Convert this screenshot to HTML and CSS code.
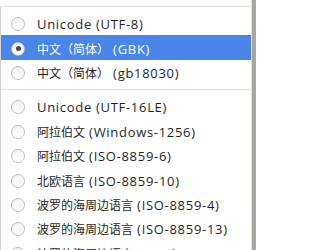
FILE: index.html
```html
<!DOCTYPE html>
<html>
<head>
<meta charset="utf-8">
<link rel="stylesheet" href="styles.css">
</head>
<body>
<div class="screen">
  <div class="main">
    <div class="sep top"></div>
    <div class="menu">
      <div class="item"><span class="radio"></span><span class="label">Unicode (UTF-8)</span></div>
      <div class="item selected"><span class="radio checked"></span><span class="label"><span class="cjk">中文（简体）</span> (GBK)</span></div>
      <div class="item"><span class="radio"></span><span class="label"><span class="cjk">中文（简体）</span> (gb18030)</span></div>
      <div class="sep"></div>
      <div class="item"><span class="radio"></span><span class="label">Unicode (UTF-16LE)</span></div>
      <div class="item"><span class="radio"></span><span class="label"><span class="cjk">阿拉伯文</span> (Windows-1256)</span></div>
      <div class="item"><span class="radio"></span><span class="label"><span class="cjk">阿拉伯文</span> (ISO-8859-6)</span></div>
      <div class="item"><span class="radio"></span><span class="label"><span class="cjk">北欧语言</span> (ISO-8859-10)</span></div>
      <div class="item"><span class="radio"></span><span class="label"><span class="cjk">波罗的海周边语言</span> (ISO-8859-4)</span></div>
      <div class="item"><span class="radio"></span><span class="label"><span class="cjk">波罗的海周边语言</span> (ISO-8859-13)</span></div>
      <div class="item"><span class="radio"></span><span class="label"><span class="cjk">波罗的海周边语言</span> (Windows-1257)</span></div>
    </div>
  </div>
  <div class="scrollbar"></div>
</div>
</body>
</html>
```
FILE: styles.css
```css
html, body {
  margin: 0;
  padding: 0;
  background: #ffffff;
}
.screen {
  display: flex;
  width: 256px;
  height: 250px;
  overflow: hidden;
}
.main {
  flex: 1;
  display: flex;
  flex-direction: column;
  padding-top: 6px;
}
.menu {
  flex: 1;
  border-left: 1px solid #d4d4d4;
  padding-top: 4px;
  color: #1f1f1f;
}
.sep {
  height: 1px;
  background: #e3e3e3;
  margin: 5px 0 4px 0;
}
.sep.top {
  margin: 0;
  flex: none;
}
.item {
  display: flex;
  align-items: center;
  height: 24.4px;
  white-space: nowrap;
  padding-top: 2px;
  box-sizing: border-box;
}
.item.selected {
  background: #4a86ea;
  color: #ffffff;
}
.radio {
  box-sizing: border-box;
  width: 14px;
  height: 14px;
  margin-left: 10px;
  margin-right: 12px;
  border-radius: 50%;
  border: 1px solid #bcbcbc;
  background: linear-gradient(#f2f2f2, #ffffff);
  flex: none;
  display: flex;
  align-items: center;
  justify-content: center;
}
.radio.checked::after {
  content: "";
  width: 5px;
  height: 5px;
  border-radius: 50%;
  background: #474747;
}
.label {
  font-family: "Open Sans", "Noto Sans CJK SC", sans-serif;
  font-size: 13px;
  letter-spacing: 0.7px;
}
.cjk {
  font-family: "Noto Sans CJK SC", sans-serif;
  font-size: 12px;
  letter-spacing: 0;
}
.scrollbar {
  width: 4px;
  background: #a8a8a0;
  border-left: 1px solid #e0e0e0;
}
```
